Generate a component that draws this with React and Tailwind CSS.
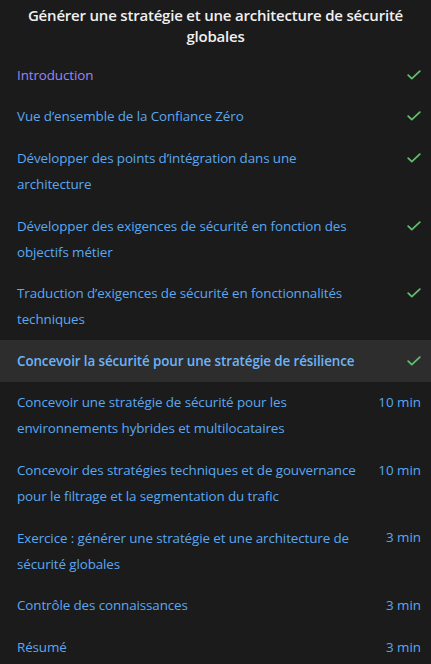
import React from "react";

const items = [
  { t: "Introduction", done: true, visited: true },
  { t: "Vue d’ensemble de la Confiance Zéro", done: true },
  { t: "Développer des points d’intégration dans une architecture", done: true },
  { t: "Développer des exigences de sécurité en fonction des objectifs métier", done: true },
  { t: "Traduction d’exigences de sécurité en fonctionnalités techniques", done: true },
  { t: "Concevoir la sécurité pour une stratégie de résilience", done: true, active: true },
  { t: "Concevoir une stratégie de sécurité pour les environnements hybrides et multilocataires", time: "10 min" },
  { t: "Concevoir des stratégies techniques et de gouvernance pour le filtrage et la segmentation du trafic", time: "10 min" },
  { t: "Exercice : générer une stratégie et une architecture de sécurité globales", time: "3 min" },
  { t: "Contrôle des connaissances", time: "3 min" },
  { t: "Résumé", time: "3 min" },
];

function Check() {
  return (
    <svg width="14" height="10" viewBox="0 0 14 10" fill="none">
      <path d="M1.2 5.2 L4.8 8.6 L12.8 1.2" stroke="#5fbf6a" strokeWidth="1.8" strokeLinecap="round" strokeLinejoin="round" />
    </svg>
  );
}

export default function App() {
  return (
    <div
      className="w-[431px] h-[664px] overflow-hidden bg-[#1b1b1b]"
      style={{ fontFamily: '"Open Sans", "Noto Sans", sans-serif' }}
    >
      <h1 className="pt-[5px] px-2 text-center text-[15px] leading-[21px] font-semibold tracking-[-0.2px] text-[#f0f0f0]">
        Générer une stratégie et une architecture de sécurité globales
      </h1>
      <ul className="mt-[7px]">
        {items.map((it, i) => (
          <li
            key={i}
            className={`flex items-start pl-[17px] pr-[10px] py-[7.8px] ${it.active ? "bg-[#2d2d2d]" : ""}`}
          >
            <span
              className={`flex-1 pr-[12px] text-[13.4px] leading-[26px] tracking-[-0.1px] ${
                it.visited ? "text-[#9a86f7]" : it.active ? "text-[#6cb4f7] font-semibold" : "text-[#5aa8f2]"
              }`}
            >
              {it.t}
            </span>
            <span className="w-[44px] flex justify-end h-[26px] items-center text-[13.4px] text-[#5aa8f2] whitespace-nowrap">
              {it.done ? <Check /> : it.time}
            </span>
          </li>
        ))}
      </ul>
    </div>
  );
}
